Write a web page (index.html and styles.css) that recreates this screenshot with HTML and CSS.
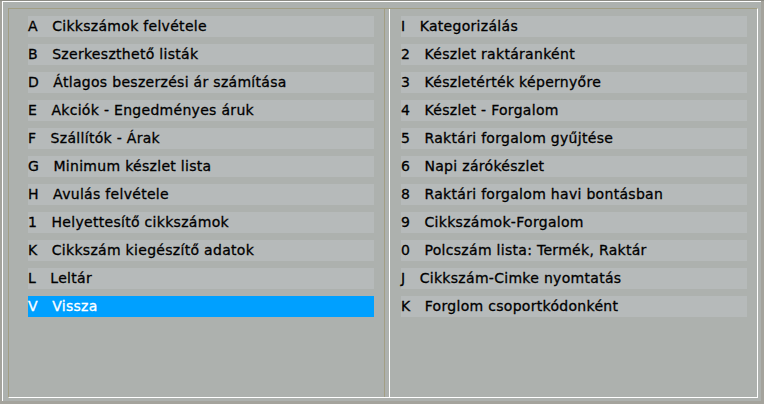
FILE: index.html
```html
<!DOCTYPE html>
<html lang="hu">
<head>
    <meta charset="UTF-8">
    <title>Cikkszámok</title>

    <link rel="stylesheet" href="styles.css">
</head>
<body>

<div class="window">
    <div class="frame">
        <ul class="menu menu-left">
            <li class="menu-item">A   Cikkszámok felvétele</li>
            <li class="menu-item">B   Szerkeszthető listák</li>
            <li class="menu-item">D   Átlagos beszerzési ár számítása</li>
            <li class="menu-item">E   Akciók - Engedményes áruk</li>
            <li class="menu-item">F   Szállítók - Árak</li>
            <li class="menu-item">G   Minimum készlet lista</li>
            <li class="menu-item">H   Avulás felvétele</li>
            <li class="menu-item">1   Helyettesítő cikkszámok</li>
            <li class="menu-item">K   Cikkszám kiegészítő adatok</li>
            <li class="menu-item">L   Leltár</li>
            <li class="menu-item selected">V   Vissza</li>
        </ul>

        <ul class="menu menu-right">
            <li class="menu-item">I   Kategorizálás</li>
            <li class="menu-item">2   Készlet raktáranként</li>
            <li class="menu-item">3   Készletérték képernyőre</li>
            <li class="menu-item">4   Készlet - Forgalom</li>
            <li class="menu-item">5   Raktári forgalom gyűjtése</li>
            <li class="menu-item">6   Napi zárókészlet</li>
            <li class="menu-item">8   Raktári forgalom havi bontásban</li>
            <li class="menu-item">9   Cikkszámok-Forgalom</li>
            <li class="menu-item">0   Polcszám lista: Termék, Raktár</li>
            <li class="menu-item">J   Cikkszám-Cimke nyomtatás</li>
            <li class="menu-item">K   Forglom csoportkódonként</li>
        </ul>
    </div>
</div>

</body>
</html>
```

FILE: styles.css
```css
* {
    box-sizing: border-box;
}

body {
    margin: 0;
    width: 764px;
    height: 404px;
    overflow: hidden;
    background: #a4a39c;
    border-top: 1px solid #8c8b84;
    font: 14px "DejaVu Sans", Verdana, sans-serif;
}

.window {
    margin-left: 2px;
    width: 759px;
    height: 400px;
    padding: 6px 0 0 5px;
    background: #adb1ae;
    border-top: 1px solid #fff;
    border-left: 1px solid #fff;
}

.frame {
    display: grid;
    grid-template-columns: 376px 368px;
    column-gap: 4px;
    width: 750px;
    height: 390px;
    border-top: 1px solid #a29e84;
    border-left: 1px solid #a29e84;
    border-right: 1px solid #fff;
    border-bottom: 1px solid #fff;
}

.menu {
    list-style: none;
    margin: 0;
    padding: 7px 10px 0 0;
    display: flex;
    flex-direction: column;
    gap: 7px;
}

.menu-left {
    padding-left: 19px;
    border-right: 1px solid #a29e84;
}

.menu-right {
    padding-left: 11px;
    border-left: 1px solid #fff;
}

.menu-item {
    height: 21px;
    line-height: 21px;
    background: #b6baba;
    color: #000;
    white-space: pre;
    letter-spacing: 0.3px;
    -webkit-text-stroke: 0.3px #000;
}

.menu-item.selected {
    background: #00a0ff;
    color: #fff;
    -webkit-text-stroke-color: #fff;
}
```
